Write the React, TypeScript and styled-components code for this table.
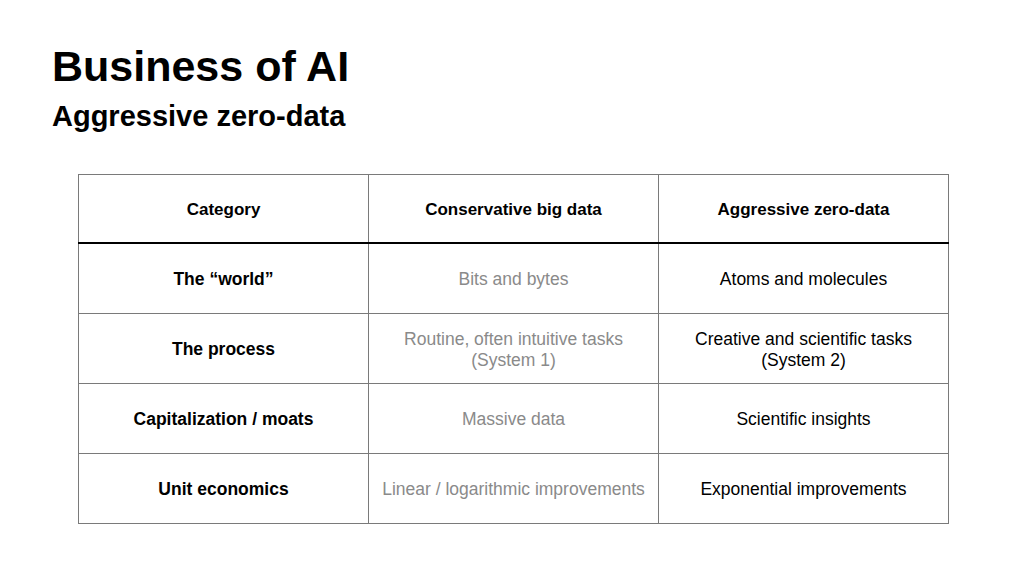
import * as React from "react";
import styled, { createGlobalStyle } from "styled-components";

const GlobalStyle = createGlobalStyle`
  html, body {
    margin: 0;
    padding: 0;
    background: #fff;
  }
  body {
    font-family: "Liberation Sans", Arial, sans-serif;
    color: #000;
  }
`;

const Slide = styled.div`
  width: 1024px;
  height: 569px;
  box-sizing: border-box;
  padding: 41px 0 0 52px;
  display: flex;
  flex-direction: column;
`;

const Title = styled.h1`
  margin: 0;
  font-size: 43px;
  line-height: 50px;
  font-weight: 700;
  letter-spacing: 0;
`;

const Subtitle = styled.h2`
  margin: 8px 0 0;
  font-size: 29px;
  line-height: 34px;
  font-weight: 700;
  letter-spacing: 0;
`;

const Table = styled.table`
  margin: 41px 0 0 26px;
  width: 871px;
  border-collapse: collapse;
  table-layout: fixed;
  font-size: 17.5px;
`;

const HeadCell = styled.th`
  height: 65px;
  border: 1px solid #7a7a7a;
  border-bottom: 2px solid #000;
  font-size: 17px;
  font-weight: 700;
  text-align: center;
  vertical-align: middle;
  padding: 2px 0 0;
`;

const Cell = styled.td<{ $tone?: "label" | "muted" | "plain" }>`
  height: 67px;
  border: 1px solid #7a7a7a;
  text-align: center;
  vertical-align: middle;
  padding: 2px 8px 0;
  line-height: 21px;
  font-weight: ${(p) => (p.$tone === "label" ? 700 : 400)};
  color: ${(p) => (p.$tone === "muted" ? "#8a8a8a" : "#000")};
`;

const rows: [string, string[], string[]][] = [
  ["The \u201cworld\u201d", ["Bits and bytes"], ["Atoms and molecules"]],
  [
    "The process",
    ["Routine, often intuitive tasks", "(System 1)"],
    ["Creative and scientific tasks", "(System 2)"],
  ],
  ["Capitalization / moats", ["Massive data"], ["Scientific insights"]],
  [
    "Unit economics",
    ["Linear / logarithmic improvements"],
    ["Exponential improvements"],
  ],
];

const Lines = ({ lines }: { lines: string[] }) => (
  <>
    {lines.map((l, i) => (
      <React.Fragment key={i}>
        {i > 0 && <br />}
        {l}
      </React.Fragment>
    ))}
  </>
);

export default function App() {
  return (
    <>
      <GlobalStyle />
      <Slide>
        <Title>Business of AI</Title>
        <Subtitle>Aggressive zero-data</Subtitle>
        <Table>
          <thead>
            <tr>
              <HeadCell>Category</HeadCell>
              <HeadCell>Conservative big data</HeadCell>
              <HeadCell>Aggressive zero-data</HeadCell>
            </tr>
          </thead>
          <tbody>
            {rows.map(([label, big, zero]) => (
              <tr key={label}>
                <Cell $tone="label">{label}</Cell>
                <Cell $tone="muted">
                  <Lines lines={big} />
                </Cell>
                <Cell $tone="plain">
                  <Lines lines={zero} />
                </Cell>
              </tr>
            ))}
          </tbody>
        </Table>
      </Slide>
    </>
  );
}
